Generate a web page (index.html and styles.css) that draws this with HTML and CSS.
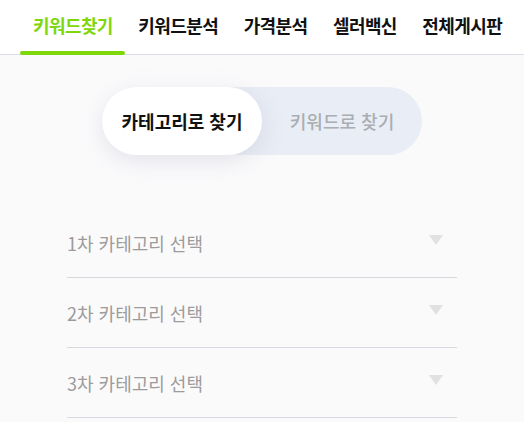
FILE: index.html
```html
<!DOCTYPE html>
<html lang="ko">
<head>
<meta charset="UTF-8">
<link rel="stylesheet" href="styles.css">
</head>
<body>
	<nav class="tabs">
		<a class="tab active">키워드찾기</a>
		<a class="tab">키워드분석</a>
		<a class="tab">가격분석</a>
		<a class="tab">셀러백신</a>
		<a class="tab">전체게시판</a>
	</nav>
	<main class="content">
		<div class="switch">
			<button class="switch-btn on">카테고리로 찾기</button>
			<button class="switch-btn">키워드로 찾기</button>
		</div>
		<div class="selects">
			<div class="select"><span>1차 카테고리 선택</span><i class="caret"></i></div>
			<div class="select"><span>2차 카테고리 선택</span><i class="caret"></i></div>
			<div class="select"><span>3차 카테고리 선택</span><i class="caret"></i></div>
		</div>
	</main>
</body>
</html>
```

FILE: styles.css
```css
html, body {
	margin: 0;
	font-family: "Noto Sans CJK KR", "Noto Sans", sans-serif;
	background: #fbfafb;
}

.tabs {
	display: flex;
	height: 54px;
	padding-left: 20px;
	background: #fff;
	border-bottom: 1px solid #d9dce2;
}
.tab {
	position: relative;
	display: flex;
	align-items: center;
	padding: 0 12.5px 5px 13px;
	font-size: 18px;
	font-weight: 700;
	color: #111;
	letter-spacing: -0.6px;
}
.tab.active { color: #7ed70b; }
.tab.active::after {
	content: "";
	position: absolute;
	left: 0;
	right: 0;
	bottom: -1px;
	height: 4px;
	border-radius: 3px;
	background: #7ed70b;
}

.content {
	display: flex;
	flex-direction: column;
	align-items: center;
	padding-top: 32px;
}

.switch {
	display: flex;
	width: 320px;
	height: 68px;
	border-radius: 34px;
	background: #e9edf5;
}
.switch-btn {
	flex: 1;
	border: none;
	border-radius: 34px;
	background: transparent;
	font-family: inherit;
	font-size: 18px;
	font-weight: 500;
	color: #aaadb2;
	padding: 0;
}
.switch-btn.on {
	background: #fff;
	color: #111;
	font-weight: 700;
	box-shadow: 0 6px 24px rgba(120, 130, 160, 0.18);
}

.selects {
	width: 390px;
	margin-top: 53px;
}
.select {
	display: flex;
	align-items: center;
	justify-content: space-between;
	height: 69px;
	padding-right: 14px;
	border-bottom: 1px solid #d6d9df;
	font-size: 18px;
	color: #9c9c9c;
}
.caret {
	width: 0;
	height: 0;
	margin-top: -6px;
	border-left: 7.5px solid transparent;
	border-right: 7.5px solid transparent;
	border-top: 10px solid #e1e1e1;
}
```
